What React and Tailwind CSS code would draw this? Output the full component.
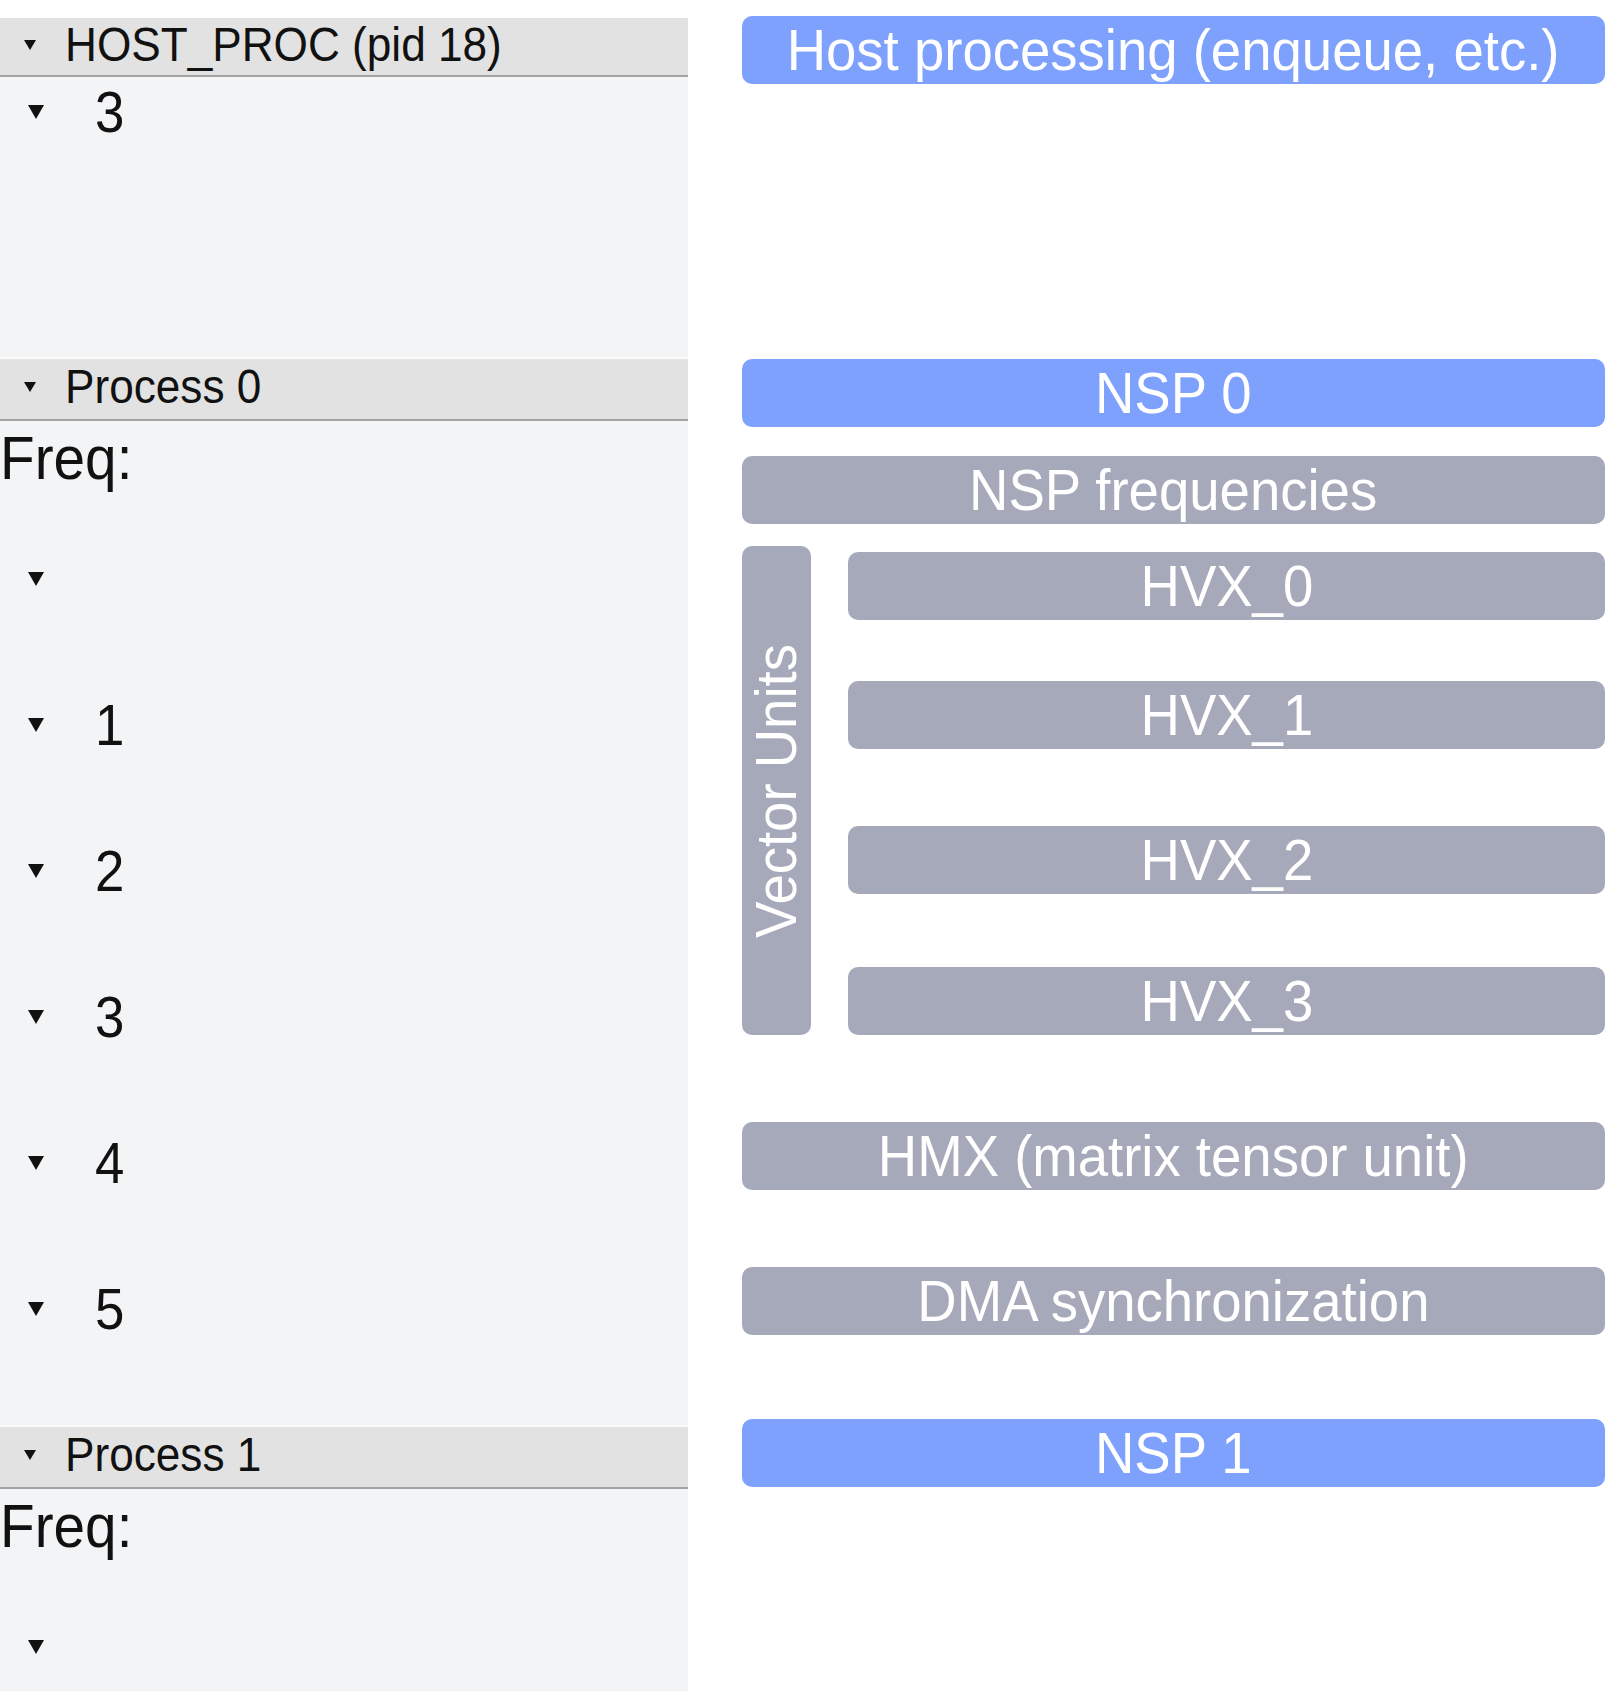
import React from 'react';

const font = { fontFamily: '"Liberation Sans", Arial, sans-serif' };

function Tri({ big }) {
  return big ? (
    <svg width="16" height="14" viewBox="0 0 16 14" className="shrink-0">
      <path d="M0 0 L16 0 L8 14 Z" fill="#111" />
    </svg>
  ) : (
    <svg width="12" height="10" viewBox="0 0 12 10" className="shrink-0">
      <path d="M0 0 L12 0 L6 10 Z" fill="#111" />
    </svg>
  );
}

function Header({ label, first }) {
  return (
    <div className={`shrink-0 flex items-center pb-[4px] bg-[#e2e2e2] border-b-2 border-[#a3a3a3] ${first ? 'h-[59px]' : 'h-[64px] border-t-2 border-t-[#fbfbfb]'}`}>
      <div className="w-[65px] flex pl-[24px]"><Tri /></div>
      <span className="inline-block origin-left scale-x-[0.92] whitespace-nowrap text-[48px] leading-none text-[#111]">{label}</span>
    </div>
  );
}

function Freq() {
  return (
    <div className="shrink-0 h-[74px] flex items-center">
      <span className="inline-block origin-left scale-x-[0.93] text-[61px] leading-none text-[#111]">Freq:</span>
    </div>
  );
}

function TreeRow({ n, h = 'h-[146px]' }) {
  return (
    <div className={`${h} shrink-0 flex items-center`}>
      <div className="w-[95px] pl-[28px]"><Tri big /></div>
      <span className="inline-block origin-left scale-x-[0.91] text-[58px] leading-none text-[#111]">{n}</span>
    </div>
  );
}

function Box({ label, blue, className = '' }) {
  return (
    <div className={`shrink-0 h-[68px] rounded-[10px] flex items-center justify-center overflow-hidden ${blue ? 'bg-[#7ea1fd]' : 'bg-[#a6a9b9]'} ${className}`}>
      <span className="inline-block scale-x-[0.94] whitespace-nowrap text-[58px] leading-none text-white">{label}</span>
    </div>
  );
}

export default function App() {
  return (
    <div className="w-[1607px] h-[1691px] bg-white flex overflow-hidden" style={font}>
      {/* left tree */}
      <div className="w-[688px] shrink-0 mt-[18px] bg-[#f3f4f6] flex flex-col">
        <Header label="HOST_PROC (pid 18)" first />
        <TreeRow n="3" h="h-[70px]" />
        <div className="shrink-0 h-[210px]" />

        <Header label="Process 0" />
        <Freq />
        <div className="shrink-0 h-[11px]" />
        {['', '1', '2', '3', '4', '5'].map((n, i) => <TreeRow key={i} n={n} />)}
        <div className="shrink-0 h-[43px]" />

        <Header label="Process 1" />
        <Freq />
        <div className="shrink-0 h-[11px]" />
        <TreeRow n="" />
      </div>

      {/* right track labels */}
      <div className="w-[863px] ml-[54px] flex flex-col pt-[16px]">
        <Box label="Host processing (enqueue, etc.)" blue />
        <Box label="NSP 0" blue className="mt-[275px]" />
        <Box label="NSP frequencies" className="mt-[29px]" />

        <div className="shrink-0 mt-[22px] h-[489px] flex gap-[37px]">
          <div className="w-[69px] h-full rounded-[10px] bg-[#a6a9b9] flex items-center justify-center">
            <span className="inline-block -rotate-90 scale-x-[0.94] whitespace-nowrap text-[58px] leading-none text-white">Vector Units</span>
          </div>
          <div className="flex-1 flex flex-col">
            <Box label="HVX_0" className="mt-[6px]" />
            <Box label="HVX_1" className="mt-[61px]" />
            <Box label="HVX_2" className="mt-[77px]" />
            <Box label="HVX_3" className="mt-[73px]" />
          </div>
        </div>

        <Box label="HMX (matrix tensor unit)" className="mt-[87px]" />
        <Box label="DMA synchronization" className="mt-[77px]" />
        <Box label="NSP 1" blue className="mt-[84px]" />
      </div>
    </div>
  );
}
